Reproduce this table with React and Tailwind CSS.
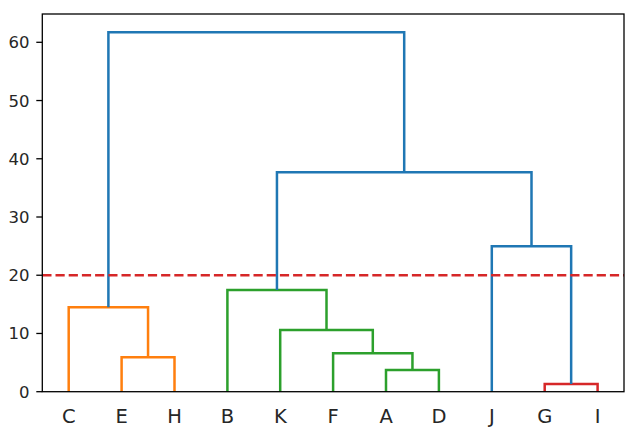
const Y0 = 391.7;

const links = [
  { c: '#ff7f0e', x1: 121.6, y1: Y0, x2: 174.5, y2: Y0, top: 357.3 },
  { c: '#ff7f0e', x1: 68.7, y1: Y0, x2: 148.05, y2: 357.3, top: 307.3 },
  { c: '#2ca02c', x1: 386, y1: Y0, x2: 438.9, y2: Y0, top: 370 },
  { c: '#2ca02c', x1: 333.1, y1: Y0, x2: 412.45, y2: 370, top: 353.3 },
  { c: '#2ca02c', x1: 280.2, y1: Y0, x2: 372.8, y2: 353.3, top: 330 },
  { c: '#2ca02c', x1: 227.4, y1: Y0, x2: 326.5, y2: 330, top: 290 },
  { c: '#d62728', x1: 544.7, y1: Y0, x2: 597.6, y2: Y0, top: 384 },
  { c: '#1f77b4', x1: 491.8, y1: Y0, x2: 571.15, y2: 384, top: 246.3 },
  { c: '#1f77b4', x1: 276.95, y1: 290, x2: 531.5, y2: 246.3, top: 172.3 },
  { c: '#1f77b4', x1: 108.4, y1: 307.3, x2: 404.2, y2: 172.3, top: 32.3 },
];

const leaves = ['C', 'E', 'H', 'B', 'K', 'F', 'A', 'D', 'J', 'G', 'I'];
const yTicks = [0, 10, 20, 30, 40, 50, 60];

function Dendrogram() {
  const left = 42.3;
  const right = 624;
  const top = 14;
  const perUnit = (Y0 - 42.3) / 60;

  return (
    <svg width="639" height="432" viewBox="0 0 639 432" className="block">
      {links.map((l, i) => (
        <path
          key={i}
          d={`M${l.x1} ${l.y1} V${l.top} H${l.x2} V${l.y2}`}
          fill="none"
          stroke={l.c}
          strokeWidth="2.5"
        />
      ))}

      <line x1={left} x2={right} y1={275.2} y2={275.2} stroke="#d62728" strokeWidth="2.5" strokeDasharray="9.2 4" />

      <rect x={left} y={top} width={right - left} height={Y0 - top} fill="none" stroke="#000" strokeWidth="1.3" />

      {yTicks.map(t => {
        const y = Y0 - t * perUnit;
        return (
          <g key={t}>
            <line x1={36.3} x2={left} y1={y} y2={y} stroke="#000" strokeWidth="1.3" />
            <text x={29.5} y={y + 6} textAnchor="end" fontSize="16.5" fill="#262626" fontFamily="'DejaVu Sans', sans-serif">
              {t}
            </text>
          </g>
        );
      })}

      {leaves.map((name, i) => (
        <text
          key={name}
          x={68.7 + i * 52.9}
          y={422.5}
          textAnchor="middle"
          fontSize="19.5"
          fill="#262626"
          fontFamily="'DejaVu Sans', sans-serif"
        >
          {name}
        </text>
      ))}
    </svg>
  );
}

export default function App() {
  return (
    <div className="w-[639px] h-[432px] bg-white overflow-hidden">
      <Dendrogram />
    </div>
  );
}
